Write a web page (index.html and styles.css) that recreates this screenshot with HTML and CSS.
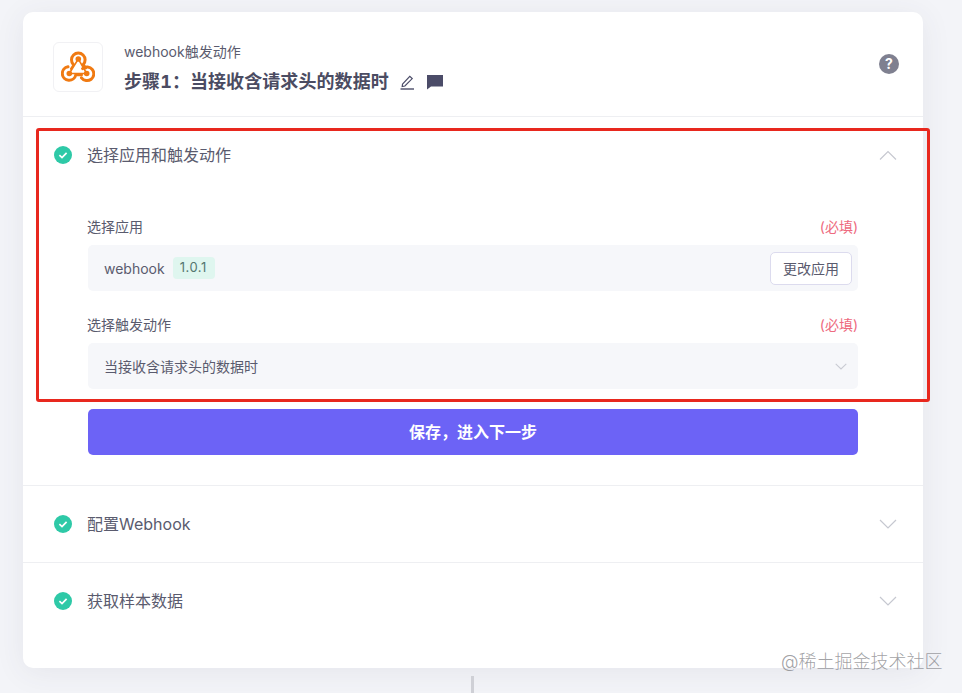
FILE: index.html
```html
<!DOCTYPE html>
<html lang="zh-CN">
<head>
<meta charset="utf-8">
<title>webhook触发动作</title>
<link rel="stylesheet" href="styles.css">
</head>
<body>
<main class="card">
  <header class="head">
    <div class="logo">
      <svg width="34" height="34" viewBox="0 0 34 34" fill="none" stroke="#f07a12" stroke-linecap="round" stroke-linejoin="round">
        <path d="M12.4 14.6 A6.8 6.8 0 1 1 22.2 14.6 L24.5 18" stroke-width="3"/>
        <path d="M7 16.8 A6.8 6.8 0 1 0 14.8 24.8 H20.5" stroke-width="3"/>
        <path d="M20.5 27.8 A6.8 6.8 0 1 0 21.6 18.6" stroke-width="3"/>
        <path d="M12.4 14.6 L9.6 19 M17.3 9 L8.3 23.5 M17.3 9 L25.7 23.5 M8.3 23.5 H25.7" stroke-width="1.5"/>
        <circle cx="17.3" cy="9" r="2.8" fill="#f07a12" stroke="none"/>
        <circle cx="8.3" cy="23.5" r="2.8" fill="#f07a12" stroke="none"/>
        <circle cx="25.7" cy="23.5" r="2.8" fill="#f07a12" stroke="none"/>
      </svg>
    </div>
    <div class="head-text">
      <div class="sub">webhook触发动作</div>
      <div class="title-row">
        <h1 class="title">步骤1：当接收含请求头的数据时</h1>
        <svg class="pen" width="16" height="16" viewBox="0 0 16 16" fill="none" stroke="#4b4c68" stroke-width="1.2">
          <path d="M3.5 10.2 L10.8 2.4 L13.2 4.6 L5.9 12 L3.2 12.6 Z"/>
          <path d="M1.5 15 H15" stroke-width="1.4"/>
        </svg>
        <svg class="note" width="16" height="16" viewBox="0 0 16 16">
          <path d="M0 1 H16 V12.6 H4 L0 15.6 Z" fill="#4b4c68"/>
        </svg>
      </div>
    </div>
    <div class="help">?</div>
  </header>

  <section class="sec sec-open">
    <div class="sec-row">
      <svg class="check" width="18" height="18" viewBox="0 0 18 18"><circle cx="9" cy="9" r="9" fill="#2ec9a7"/><path d="M5.4 9.2 L8 11.6 L12.6 6.9" fill="none" stroke="#fff" stroke-width="1.7"/></svg>
      <span class="sec-name">选择应用和触发动作</span>
      <svg class="chev" width="18" height="10" viewBox="0 0 18 10"><path d="M1 9.5 L9 1.5 L17 9.5" fill="none" stroke="#c6c8d0" stroke-width="1.2"/></svg>
    </div>
    <div class="form">
      <div class="label-row"><span>选择应用</span><span class="req">(必填)</span></div>
      <div class="field field-app">
        <span class="app">webhook</span>
        <span class="badge">1.0.1</span>
        <button class="change">更改应用</button>
      </div>
      <div class="label-row label-row-2"><span>选择触发动作</span><span class="req">(必填)</span></div>
      <div class="field">
        <span class="val">当接收含请求头的数据时</span>
        <svg class="field-chev" width="12" height="7" viewBox="0 0 12 7"><path d="M.7 .8 L6 6 L11.3 .8" fill="none" stroke="#c9cbd3" stroke-width="1.1"/></svg>
      </div>
      <button class="save">保存，进入下一步</button>
    </div>
  </section>

  <section class="sec sec-closed">
    <div class="sec-row">
      <svg class="check" width="18" height="18" viewBox="0 0 18 18"><circle cx="9" cy="9" r="9" fill="#2ec9a7"/><path d="M5.4 9.2 L8 11.6 L12.6 6.9" fill="none" stroke="#fff" stroke-width="1.7"/></svg>
      <span class="sec-name">配置Webhook</span>
      <svg class="chev" width="18" height="10" viewBox="0 0 18 10"><path d="M1 1 L9 9 L17 1" fill="none" stroke="#c6c8d0" stroke-width="1.2"/></svg>
    </div>
  </section>

  <section class="sec sec-closed">
    <div class="sec-row">
      <svg class="check" width="18" height="18" viewBox="0 0 18 18"><circle cx="9" cy="9" r="9" fill="#2ec9a7"/><path d="M5.4 9.2 L8 11.6 L12.6 6.9" fill="none" stroke="#fff" stroke-width="1.7"/></svg>
      <span class="sec-name">获取样本数据</span>
      <svg class="chev" width="18" height="10" viewBox="0 0 18 10"><path d="M1 1 L9 9 L17 1" fill="none" stroke="#c6c8d0" stroke-width="1.2"/></svg>
    </div>
  </section>
</main>
<div class="connector"></div>
<div class="highlight"></div>
<div class="watermark">@稀土掘金技术社区</div>
</body>
</html>
```

FILE: styles.css
```css
* { box-sizing: border-box; }
html, body { margin: 0; height: 693px; overflow: hidden; }
body {
  position: relative;
  padding: 12px 0 0 23px;
  background: #f3f4f8;
  color: #5a5b6e;
  font-family: Inter, "Noto Sans CJK SC", sans-serif;
}
.card {
  width: 900px;
  height: 656px;
  background: #fff;
  border-radius: 10px;
  box-shadow: 0 4px 30px rgba(60, 62, 90, .08);
}
.head {
  display: flex;
  align-items: flex-start;
  height: 105px;
  padding: 30px 24px 0 30px;
  border-bottom: 1px solid #eeeff2;
}
.logo {
  display: flex;
  align-items: center;
  justify-content: center;
  width: 50px;
  height: 50px;
  border: 1px solid #f1f1f4;
  border-radius: 6px;
}
.head-text { flex: 1; margin-left: 21px; }
.sub { font-size: 14px; line-height: 20px; }
.title-row { display: flex; align-items: center; margin-top: 8px; }
.title {
  margin: 0;
  font-size: 18px;
  line-height: 24px;
  font-weight: 700;
  color: #4b4c62;
  font-feature-settings: "tnum";
  letter-spacing: .08px;
}
.pen { margin-left: 10px; }
.note { margin-left: 12px; }
.help {
  width: 20px;
  height: 20px;
  margin-top: 12px;
  border-radius: 50%;
  background: #7f8090;
  color: #fff;
  font-size: 14px;
  font-weight: 700;
  line-height: 20px;
  text-align: center;
}
.sec-row { display: flex; align-items: center; padding: 0 26px 0 31px; }
.check { flex: none; }
.sec-name { flex: 1; margin-left: 15px; font-size: 16px; line-height: 24px; }
.sec-open { height: 369px; border-bottom: 1px solid #eeeff2; padding-top: 26px; }
.sec-closed { height: 76px; padding-top: 26px; }
.sec-closed + .sec-closed { border-top: 1px solid #eeeff2; height: 77px; }
.form { width: 770px; margin: 50px 0 0 65px; }
.label-row {
  display: flex;
  justify-content: space-between;
  height: 20px;
  font-size: 14px;
  line-height: 20px;
  margin-left: -1px;
}
.label-row-2 { margin-top: 24px; }
.req { color: #ee6a80; font-size: 14px; }
.field {
  display: flex;
  align-items: center;
  height: 46px;
  margin-top: 8px;
  padding: 0 11px 0 16px;
  background: #f6f7fa;
  border-radius: 5px;
  font-size: 14px;
}
.field-app { padding-right: 6px; }
.app { font-size: 14px; }
.badge {
  height: 22px;
  margin-left: 8px;
  padding: 0 8px 0 7px;
  border-radius: 4px;
  background: #dff6ef;
  color: #55766f;
  font-size: 13px;
  line-height: 20px;
  letter-spacing: .5px;
}
.change {
  height: 33px;
  width: 82px;
  margin-left: auto;
  padding: 0;
  background: #fff;
  border: 1px solid #dcdbee;
  border-radius: 5px;
  color: #5a5b6e;
  font: 14px Inter, "Noto Sans CJK SC", sans-serif;
}
.val { flex: 1; font-size: 14px; }
.save {
  display: block;
  width: 100%;
  height: 46px;
  margin-top: 20px;
  padding: 0 0 2px;
  background: #6c63f6;
  border: 0;
  border-radius: 5px;
  color: #fff;
  font: 700 16px "Noto Sans CJK SC", serif;
}
.connector { width: 3px; height: 17px; margin: 8px 0 0 448px; background: #cfd0d6; }
.highlight {
  position: absolute;
  left: 36px;
  top: 128px;
  width: 894px;
  height: 274px;
  border: 3px solid #e8281e;
  border-radius: 3px;
}
.watermark {
  position: absolute;
  left: 781px;
  top: 649px;
  font-size: 18px;
  line-height: 26px;
  color: rgba(120, 120, 125, .7);
  font-weight: 300;
  white-space: nowrap;
}
```
